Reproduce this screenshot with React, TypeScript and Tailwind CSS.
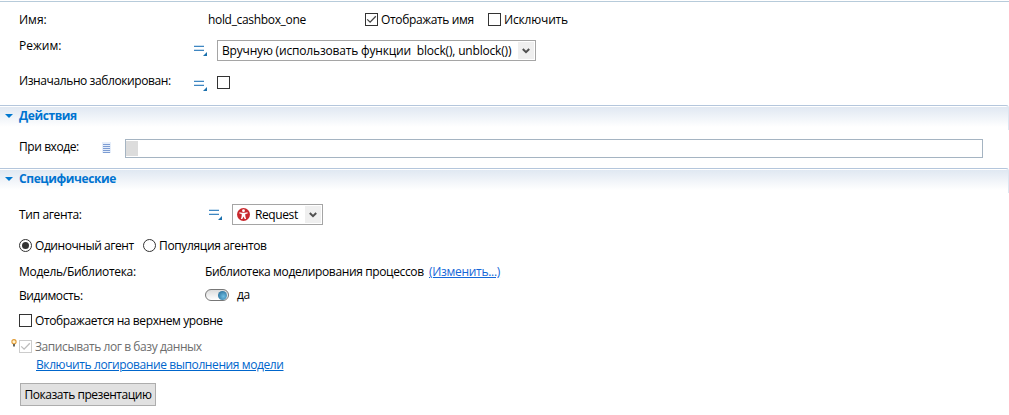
import type { ReactNode } from "react";

function Label({ className = "", children }: { className?: string; children: ReactNode }) {
  return <span className={`h-4 shrink-0 whitespace-pre leading-4 ${className}`}>{children}</span>;
}

function Checkbox({ checked = false, disabled = false }: { checked?: boolean; disabled?: boolean }) {
  return (
    <span className={`mt-px flex size-[13px] shrink-0 items-center justify-center border bg-white ${disabled ? "border-[#cccccc] text-[#bcbcbc]" : "border-[#333333] text-[#444444]"}`}>
      {checked && (
        <svg viewBox="0 0 11 11" className="size-[11px]" fill="none" stroke="currentColor" strokeWidth="1.3">
          <path d="M1.2 5.4 4.1 8.2 9.8 2.3" />
        </svg>
      )}
    </span>
  );
}

function Radio({ checked = false }: { checked?: boolean }) {
  return (
    <span className="mt-px flex size-[13px] shrink-0 items-center justify-center rounded-full border border-[#333333] bg-white">
      {checked && <span className="size-[7px] rounded-full bg-[#333333]" />}
    </span>
  );
}

function ModeIcon() {
  return (
    <svg viewBox="0 0 14 12" className="h-3 w-3.5 shrink-0" shapeRendering="crispEdges">
      <path d="M0 0h10v1H0zM0 4h10v1H0z" fill="#c9dff0" />
      <path d="M0 1h10v1H0zM0 5h10v1H0z" fill="#3f86c1" />
      <path d="M13 7v4H9z" fill="#1a70ad" shapeRendering="auto" />
    </svg>
  );
}

function ListIcon() {
  return (
    <svg viewBox="0 0 9 11" className="h-[11px] w-[9px] shrink-0" shapeRendering="crispEdges">
      <path d="M0 0h9v11H0z" fill="#e6eefa" />
      <path d="M1 2h7v1H1zM1 4h7v1H1zM1 6h7v1H1zM1 8h7v1H1zM1 10h7v1H1z" fill="#7c9cd3" />
    </svg>
  );
}

function AgentIcon() {
  return (
    <svg viewBox="0 0 13 13" className="size-[13px] shrink-0">
      <circle cx="6.5" cy="6.5" r="6.5" fill="#c9282d" />
      <circle cx="6.5" cy="2.7" r="1.4" fill="#fff" />
      <path d="M2.4 4.2 5 4.7h3l2.6-.5v1.2L8.3 6v2.1l.8 3H7.7l-1.2-2.7-1.2 2.7H3.9l.8-3V6L2.4 5.4z" fill="#fff" />
    </svg>
  );
}

function BulbIcon() {
  return (
    <svg viewBox="0 0 6 8" className="h-2 w-1.5 shrink-0">
      <circle cx="3" cy="2.7" r="2.1" fill="#fff3cf" stroke="#e09a35" strokeWidth="1.1" />
      <path d="M2 5h2v2.5H2z" fill="#66665e" />
    </svg>
  );
}

function DropArrow() {
  return (
    <span className="flex h-[17px] w-4 shrink-0 items-center justify-center bg-[#efefef]">
      <svg viewBox="0 0 8 6" className="h-1.5 w-2" fill="none" stroke="#505050" strokeWidth="2">
        <path d="M.8 1 4 4.2 7.2 1" />
      </svg>
    </span>
  );
}

function SectionHeader({ children }: { children: ReactNode }) {
  return (
    <div className="h-[25px] rounded-tr-[3px] border-t border-r border-t-[#b4c6dc] border-r-[#dce6f0] pt-px">
      <div className="flex h-5 items-start bg-linear-to-b from-[#e0e8f2] to-white pt-px pl-[5px]">
        <svg viewBox="0 0 8 4" className="mt-1.5 mr-1.5 h-1 w-2 shrink-0" fill="#0078d0">
          <path d="M0 0h8L4 4z" />
        </svg>
        <Label className="font-bold tracking-[-0.4px] text-[#0073d0]">{children}</Label>
      </div>
    </div>
  );
}

export default function App() {
  return (
    <main className="h-[415px] w-[1009px] overflow-hidden bg-white font-['Open_Sans','Noto_Sans',sans-serif] text-[12px] text-black">
      <section className="flex h-[105px] flex-col pt-px">
        <div className="h-px shrink-0 bg-[#b7cbda]" />
        <div className="mt-2.5 flex h-4 shrink-0 items-start pl-[19px]">
          <Label className="w-[189px]">Имя:</Label>
          <Label className="w-[157px] tracking-[-0.33px]">hold_cashbox_one</Label>
          <Checkbox checked />
          <Label className="ml-[3px] w-[107px] tracking-[-0.35px]">Отображать имя</Label>
          <Checkbox />
          <Label className="ml-[3px] tracking-[-0.17px]">Исключить</Label>
        </div>
        <div className="mt-2.5 flex h-[23px] shrink-0 items-start pl-[19px]">
          <Label className="w-[175px]">Режим:</Label>
          <div className="pt-[7px]"><ModeIcon /></div>
          <div className="mt-[2px] ml-[9px] flex h-[21px] w-[319px] items-center justify-between border border-[#a5a5a5] pr-px pl-1">
            <Label className="tracking-[-0.18px]">{"Вручную (использовать функции  block(), unblock())"}</Label>
            <DropArrow />
          </div>
        </div>
        <div className="mt-3 flex h-[18px] shrink-0 items-start pl-[19px]">
          <Label className="w-[175px] tracking-[-0.4px]">Изначально заблокирован:</Label>
          <div className="mr-[9px] pt-[7px]"><ModeIcon /></div>
          <div className="pt-[2px]"><Checkbox /></div>
        </div>
      </section>

      <SectionHeader>Действия</SectionHeader>
      <div className="flex h-[38px] items-start pt-[9px] pl-[19px]">
        <Label className="w-[83px] tracking-[-0.42px]">При входе:</Label>
        <div className="w-[23px] pt-[3px]"><ListIcon /></div>
        <div className="h-[19px] w-[858px] border border-[#a5b4c2] py-px">
          <div className="h-[15px] w-3 bg-[#dcdcdc]" />
        </div>
      </div>

      <SectionHeader>Специфические</SectionHeader>
      <div className="flex h-[32px] items-start pt-[11px] pl-[19px]">
        <Label className="mt-[3px] w-[190px] tracking-[-0.35px]">Тип агента:</Label>
        <div className="mr-[9px] pt-[5px]"><ModeIcon /></div>
        <div className="flex h-[21px] w-[91px] items-center border border-[#a5a5a5] pr-px pl-1">
          <AgentIcon />
          <Label className="ml-[5px] flex-1 tracking-[-0.4px]">Request</Label>
          <DropArrow />
        </div>
      </div>
      <div className="mt-[13px] flex h-4 items-start pl-[19px]">
        <Radio checked />
        <Label className="ml-[3px] w-[108px] tracking-[-0.44px]">Одиночный агент</Label>
        <Radio />
        <Label className="ml-[3px] tracking-[-0.36px]">Популяция агентов</Label>
      </div>
      <div className="mt-2.5 flex h-4 items-start pl-[19px]">
        <Label className="w-[186px] tracking-[-0.3px]">Модель/Библиотека:</Label>
        <Label className="w-[224px] tracking-[-0.37px]">Библиотека моделирования процессов</Label>
        <Label className="tracking-[-0.3px] text-[#1467d8] underline">(Изменить...)</Label>
      </div>
      <div className="mt-2 flex h-4 items-start pl-[19px]">
        <Label className="w-[186px] tracking-[-0.38px]">Видимость:</Label>
        <div className="mt-px flex h-3 w-6 items-center justify-end rounded-full border border-[#777777] bg-linear-to-b from-[#dddddd] to-white pr-px">
          <span className="size-[9px] rounded-full bg-radial-[at_60%_60%] from-[#6fbde2] to-[#1d608c]" />
        </div>
        <Label className="-mt-px ml-2 tracking-[-0.3px]">да</Label>
      </div>
      <div className="mt-[9px] flex h-4 items-start pl-[19px]">
        <Checkbox />
        <Label className="ml-[3px] tracking-[-0.39px]">Отображается на верхнем уровне</Label>
      </div>
      <div className="mt-2.5 flex h-4 items-start pl-[11px]">
        <div className="mr-[2px]"><BulbIcon /></div>
        <Checkbox checked disabled />
        <Label className="ml-[3px] tracking-[-0.42px] text-[#6d6d6d]">Записывать лог в базу данных</Label>
      </div>
      <div className="mt-[2px] flex h-4 pl-[36px]">
        <Label className="tracking-[-0.4px] text-[#0066cc] underline">Включить логирование выполнения модели</Label>
      </div>
      <div className="mt-2.5 pl-5">
        <button className="flex h-[23px] w-[136px] items-start justify-center border border-[#adadad] bg-[#e1e1e1] pt-[3px]">
          <Label className="tracking-[-0.47px]">Показать презентацию</Label>
        </button>
      </div>
    </main>
  );
}
